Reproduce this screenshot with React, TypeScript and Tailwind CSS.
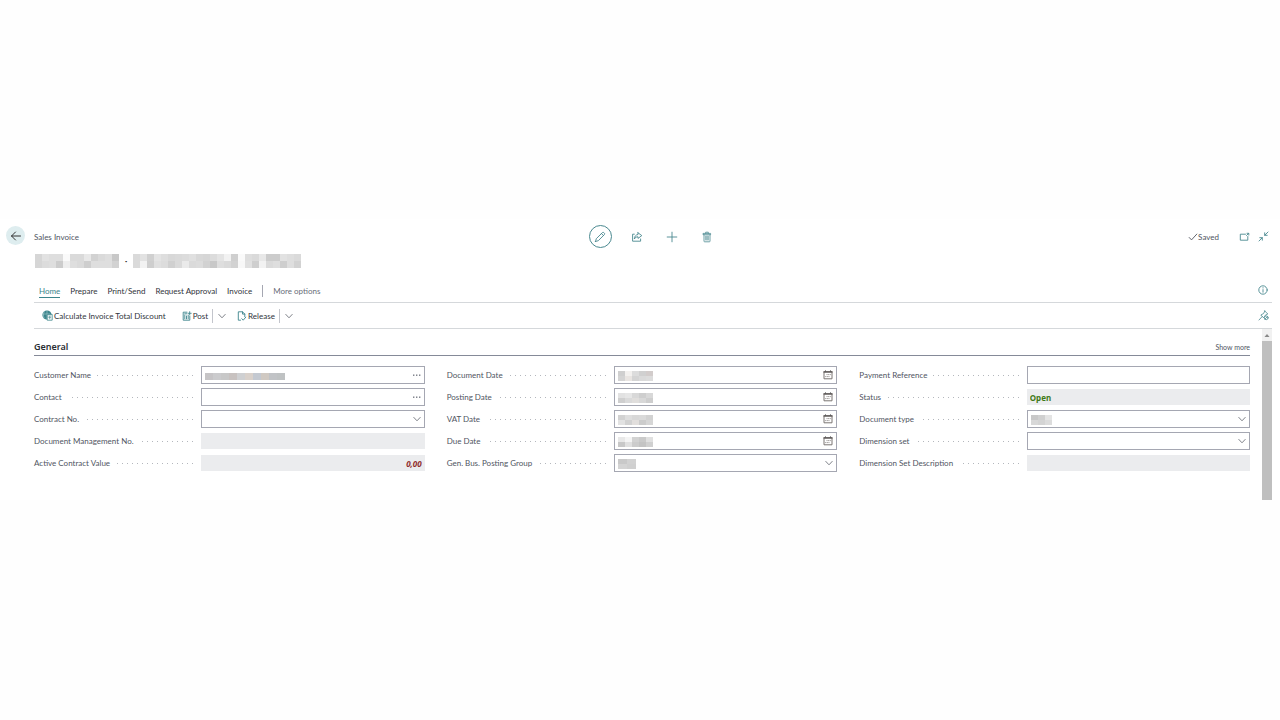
import React, { useState } from "react";

type Mosaic = { rows: string[][]; cell: string };

const headNo: string[][] = [
  ["#d6d6d6", "#e2e2e2", "#dedede", "#dedede", "#fafafa", "#dadada", "#dadada", "#e8e8e8", "#d2d2d2", "#dadada", "#dedede", "#c8c8c8"],
  ["#d6d6d6", "#dcdcdc", "#dedede", "#cccccc", "#eeeeee", "#dedede", "#dadada", "#cecece", "#dedede", "#dedede", "#dedede", "#d2d2d2"],
];
const headName: string[][] = [
  ["#dadada", "#e2e2e2", "#d0d0d0", "#e4e4e4", "#dedede", "#d8d8d8", "#dadada", "#dcdcdc", "#e0e0e0", "#d8d8d8", "#d6d6d6", "#dcdcdc", "#e4e4e4", "#f2f2f2", "#cfcfcf", "#fafafa", "#dedede", "#dadada", "#e8e8e8", "#cccccc", "#cccccc", "#e2e2e2", "#dedede", "#dadada"],
  ["#dadada", "#f2f2f2", "#cecece", "#e0e0e0", "#dcdcdc", "#d0d0d0", "#dadada", "#eaeaea", "#dadada", "#dcdcdc", "#d2d2d2", "#c8c8c8", "#dedede", "#dadada", "#d2d2d2", "#f8f8f8", "#e0e0e0", "#cecece", "#f2f2f2", "#dadada", "#dedede", "#cecece", "#dedede", "#d2d2d2"],
];

function Blocks({ rows, cell }: Mosaic) {
  return (
    <span aria-hidden="true" className="flex flex-col">
      {rows.map((row, i) => (
        <span key={i} className="flex">
          {row.map((color, j) => (
            <span key={j} className={cell} style={{ backgroundColor: color }} />
          ))}
        </span>
      ))}
    </span>
  );
}

const icon = { fill: "none", stroke: "currentColor", strokeLinecap: "round", strokeLinejoin: "round" } as const;

const Chevron = () => (
  <svg viewBox="0 0 10 10" className="size-2.5 text-[#70747c]" {...icon} strokeWidth=".9"><path d="M1.8 3.4 5 6.8l3.2-3.4" /></svg>
);
const Dots = () => (
  <svg viewBox="0 0 10 10" className="size-2.5" fill="#777b84"><rect x="1" y="4.5" width="1.4" height="1.4" /><rect x="4" y="4.5" width="1.4" height="1.4" /><rect x="7" y="4.5" width="1.4" height="1.4" /></svg>
);
const Calendar = () => (
  <svg viewBox="0 0 10 10" className="size-2.5">
    <path d="M1 1.5h8v7.3H1z" fill="#fff" stroke="#7b7573" />
    <path d="M.5 1.2h9v1.6h-9z" fill="#6b6665" />
    <path d="M2.5.4v1.4M7.5.4v1.4" stroke="#5a5a5a" />
    <path d="M3.5 4.6h4.3M2.2 6.6h4.3" stroke="#9b9795" strokeDasharray="1.1 .5" />
  </svg>
);

type Kind = "lookup" | "select" | "date" | "text" | "readonly";
type FieldDef = { label: string; kind: Kind; value?: string; tone?: string; mosaic?: Mosaic };

const date = (a: string[], b: string[]): Mosaic => ({ rows: [a, b], cell: "h-[5px] w-[7px]" });

const columns: FieldDef[][] = [
  [
    { label: "Customer Name", kind: "lookup", mosaic: { cell: "h-[7px] w-[8px]", rows: [["#c6c4c6", "#cbcbcd", "#c8c8c8", "#c8c2c0", "#cfd0d2", "#d9d1cb", "#c4c9d1", "#d0c9c2", "#c1c3c6", "#bfc2c3"]] } },
    { label: "Contact", kind: "lookup" },
    { label: "Contract No.", kind: "select" },
    { label: "Document Management No.", kind: "readonly" },
    { label: "Active Contract Value", kind: "readonly", value: "0,00", tone: "text-right italic text-[#8f2c2c]" },
  ],
  [
    { label: "Document Date", kind: "date", mosaic: date(["#cfcfcf", "#f3f1ef", "#dcdcdc", "#d0d0d0", "#d2cccb"], ["#d4d4d4", "#e9e5e2", "#d4d4d4", "#dadada", "#dcdcdc"]) },
    { label: "Posting Date", kind: "date", mosaic: date(["#e2e2e2", "#e6e6e6", "#d8d8d8", "#cecece", "#d8d8d8"], ["#cfcfcf", "#dadada", "#e0dedc", "#d8d8d8", "#cecece"]) },
    { label: "VAT Date", kind: "date", mosaic: date(["#d2d2d2", "#dedede", "#d8d8d8", "#dadada", "#d2d2d2"], ["#e2e2e2", "#d2d2d2", "#e2dfdd", "#cccccc", "#d6d6d6"]) },
    { label: "Due Date", kind: "date", mosaic: date(["#e8e8e8", "#f4f4f4", "#d2d2d2", "#cacaca", "#e0e0e0"], ["#c8c8c8", "#e0e0e0", "#cccccc", "#c4c4c4", "#d0d0d0"]) },
    { label: "Gen. Bus. Posting Group", kind: "select", mosaic: { cell: "h-[5px] w-[9px]", rows: [["#c9c9c9", "#d2d2d2"], ["#d4d4d4", "#d0d0d0"]] } },
  ],
  [
    { label: "Payment Reference", kind: "text" },
    { label: "Status", kind: "readonly", value: "Open", tone: "text-[#3f7a16]" },
    { label: "Document type", kind: "select", mosaic: { cell: "h-[5px] w-[7px]", rows: [["#c8c8c8", "#d0d0d0", "#e4e4e4"], ["#d8d8d8", "#d4d4d4", "#dcdcdc"]] } },
    { label: "Dimension set", kind: "select" },
    { label: "Dimension Set Description", kind: "readonly" },
  ],
];

function Field({ field }: { field: FieldDef }) {
  const { label, kind, value = "", tone = "", mosaic } = field;
  const id = label.toLowerCase().replace(/[^a-z]+/g, "-");
  const readOnly = kind === "readonly";
  return (
    <div className="flex h-[18px] items-center">
      <div className="flex w-3/7 shrink-0 items-center gap-1.5 pr-2">
        <label htmlFor={id} className="whitespace-nowrap">{label}</label>
        <span className="h-px flex-1 bg-[repeating-linear-gradient(to_left,#b4b7bd_0_1px,transparent_1px_5px)]" />
      </div>
      <div className={readOnly ? "grid h-4 flex-1 items-center bg-[#ebecee] *:col-start-1 *:row-start-1" : "grid h-[18px] flex-1 items-center border border-[#a5a7b2] bg-white *:col-start-1 *:row-start-1"}>
        {kind === "select" ? (
          <select id={id} className="h-full w-full appearance-none bg-transparent px-1 outline-none" />
        ) : (
          <input id={id} type="text" readOnly={readOnly} defaultValue={value} className={`h-full w-full min-w-0 bg-transparent px-[3px] font-['Noto_Sans',sans-serif] font-bold outline-none ${tone}`} />
        )}
        {mosaic && <span className="pointer-events-none justify-self-start pt-0.5 pl-[3px]"><Blocks {...mosaic} /></span>}
        {kind === "select" && <span className="pointer-events-none mr-0.5 justify-self-end"><Chevron /></span>}
        {kind === "lookup" && <button type="button" aria-label={`Look up ${label}`} className="mr-0.5 justify-self-end"><Dots /></button>}
        {kind === "date" && <button type="button" aria-label={`Choose ${label}`} className="mr-[3px] justify-self-end"><Calendar /></button>}
      </div>
    </div>
  );
}

const tabs = ["Home", "Prepare", "Print/Send", "Request Approval", "Invoice"];

export default function App() {
  const [tab, setTab] = useState("Home");
  return (
    <div className="min-h-screen bg-[#fefefe] pt-[219px] font-['Lato','Noto_Sans',sans-serif] text-[8px] leading-3 text-[#50555f]">
      <div className="bg-white">
        <header className="grid h-[35px] grid-cols-[1fr_auto_1fr] items-center pr-[15px] pl-1.5">
          <div className="flex items-center gap-[9px]">
            <button type="button" aria-label="Back" className="mb-0.5 grid size-[19px] place-items-center rounded-full bg-[#deedef] text-[#333]">
              <svg viewBox="0 0 12 12" className="size-3" {...icon}><path d="M10.5 6h-9M5.5 2 1.5 6l4 4" /></svg>
            </button>
            <span>Sales Invoice</span>
          </div>
          <div className="flex items-center gap-[19px] pl-[30px] text-[#4a8990]">
            <button type="button" aria-label="Edit" className="grid size-[23px] place-items-center rounded-full border border-current">
              <svg viewBox="0 0 12 12" className="size-3" {...icon} strokeWidth=".9"><path d="m1.5 10.5.8-2.8 6.1-6.1a1 1 0 0 1 1.4 0l.6.6a1 1 0 0 1 0 1.4L4.3 9.7l-2.8.8ZM7.5 2.6l1.9 1.9" /></svg>
            </button>
            <button type="button" aria-label="Share">
              <svg viewBox="0 0 12 12" className="mr-1 size-3" {...icon} strokeWidth=".9"><path d="M3.3 3.2H1.6v7h8V8M7 1.8l3.8 2.8L7 7.4V5.8C5.4 5.7 4.2 6.5 3.3 8c.2-2.6 1.5-4.2 3.7-4.5V1.8Z" /></svg>
            </button>
            <button type="button" aria-label="New">
              <svg viewBox="0 0 12 12" className="mr-1 size-3" {...icon} strokeWidth=".9"><path d="M6 1.2v9.6M1.2 6h9.6" /></svg>
            </button>
            <button type="button" aria-label="Delete">
              <svg viewBox="0 0 12 12" className="size-3" {...icon} strokeWidth=".8"><path d="M2.4 2.4h7.2v1.3H2.4zM4.7 2.3V1.2h2.6v1.1M3 3.8v6.4q0 .6.6.6h4.8q.6 0 .6-.6V3.8M4.8 5v4M6 5v4M7.2 5v4" /></svg>
            </button>
          </div>
          <div className="flex items-center justify-end text-[#4a8990]">
            <span className="mr-5 flex items-center text-[#50555f]">
              <svg viewBox="0 0 10 10" className="size-2.5" {...icon} strokeWidth=".9"><path d="m1.2 5.5 2.3 2.4 5.3-5.8" /></svg>
              Saved
            </span>
            <button type="button" aria-label="Open in new window" className="mr-2">
              <svg viewBox="0 0 11 10" className="h-2.5 w-[11px]" {...icon} strokeWidth=".9"><path d="M6.5 2.2H1.3v6h7.5V4.5M7.5 3.5l2-2M8 1.3h1.8v1.8" /></svg>
            </button>
            <button type="button" aria-label="Exit full width" className="-mr-1">
              <svg viewBox="0 0 11 11" className="size-[11px]" {...icon} strokeWidth=".9"><path d="M10 1 6.7 4.3M6.7 1.8v2.5h2.5M1 10l3.3-3.3M1.8 6.7h2.5v2.5" /></svg>
            </button>
          </div>
        </header>

        <h1 className="ml-[35px] flex h-3.5 items-center text-[#333]">
          <Blocks rows={headNo} cell="h-[7px] w-[7px]" />
          <span className="w-3.5 text-center font-bold">·</span>
          <Blocks rows={headName} cell="h-[7px] w-[7px]" />
        </h1>

        <div className="mt-[11px] mr-2 ml-[34px] flex h-6 items-center border-b border-[#d5d8db] pr-1">
          <nav aria-label="Actions" className="flex items-center gap-2.5 pt-px pl-[5px] text-[#30343b]">
            {tabs.map((name) => (
              <button key={name} type="button" onClick={() => setTab(name)} className={name === tab ? "border-b border-[#3c858c] text-[#3c858c]" : "border-b border-transparent"}>{name}</button>
            ))}
            <span className="h-3 w-px bg-[#a5a7b2]" />
            <button type="button" className="border-b border-transparent text-[#686d78]">More options</button>
          </nav>
          <button type="button" aria-label="Details" className="mb-px ml-auto text-[#4a8990]">
            <svg viewBox="0 0 10 10" className="size-2.5" {...icon} strokeWidth=".9"><circle cx="5" cy="5" r="4.2" /><path d="M5 4.6v2.6M5 2.7v.3" /></svg>
          </button>
        </div>

        <div className="mr-2 ml-[34px] flex h-[26px] items-center border-b border-[#d5d8db] pr-[3px] pl-2 text-[#30343b]">
          <button type="button" className="mr-4 flex items-center gap-px">
            <svg viewBox="0 0 11 11" className="size-[11px]"><circle cx="5" cy="5" r="4.6" fill="#3c858c" /><path d="M5 .5v9M1 4h7M2.5 1.5c-1.5 2-1.5 5 0 7" fill="none" stroke="#a8cfd2" strokeWidth=".6" /><path d="M5.2 4.4h5v5.8h-5z" fill="#fff" stroke="#3c858c" strokeWidth=".8" /><path d="M6.3 6h2.8M6.3 7.6h2.8M7.7 6v3.2" stroke="#3c858c" strokeWidth=".6" /></svg>
            Calculate Invoice Total Discount
          </button>
          <button type="button" className="flex items-center gap-px">
            <svg viewBox="0 0 10 10" className="size-2.5" {...icon} stroke="#3c858c" strokeWidth=".9"><path d="M5 1.2H1.2v8h6.6V5M2.8 4v3.8M4.5 5v2.8M6.2 4v3.8M2.7 2.8h2M6 2.3h3.2M7.7.7v3.1" /></svg>
            Post
          </button>
          <span className="mx-1 h-3.5 w-px bg-[#c3c5cc]" />
          <button type="button" aria-label="More posting actions" className="mr-2.5"><Chevron /></button>
          <button type="button" className="flex items-center gap-px">
            <svg viewBox="0 0 10 10" className="size-2.5" {...icon} stroke="#3c858c" strokeWidth=".9"><path d="M3.5 9.2H1.3V.8h4.2l2.3 2.3v2.6M5.5.8v2.3h2.3M4.8 7.7l1.4 1.5 2.6-3" /></svg>
            Release
          </button>
          <span className="mx-1 h-3.5 w-px bg-[#c3c5cc]" />
          <button type="button" aria-label="More release actions"><Chevron /></button>
          <button type="button" aria-label="Unpin actions" className="ml-auto text-[#4a8990]">
            <svg viewBox="0 0 11 11" className="size-[11px]" {...icon} strokeWidth=".8"><path d="m6.8 1 3 3-2.5 1.2L5.8 8 2.8 5l2.8-1.5L6.8 1ZM4.2 6.5 1 10" /><circle cx="8.2" cy="7.8" r="1.9" fill="#fff" /><path d="m6.9 9.1 2.6-2.6" /></svg>
          </button>
        </div>

        <main className="flex h-[171px] items-stretch pr-2">
          <section className="min-w-0 flex-1 pl-[34px]">
            <div className="mr-3 flex h-[27px] items-center justify-between border-b border-[#858a98] pt-2.5">
              <h2 className="font-['Noto_Sans',sans-serif] text-[9px] font-semibold text-[#292d33]">General</h2>
              <button type="button" className="text-[7px]">Show more</button>
            </div>
            <form className="mt-2.5 mr-3 grid grid-cols-3 gap-x-[22px]" onSubmit={(e) => e.preventDefault()}>
              {columns.map((fields, i) => (
                <div key={i} className="flex flex-col gap-1">
                  {fields.map((f) => <Field key={f.label} field={f} />)}
                </div>
              ))}
            </form>
          </section>
          <div aria-hidden="true" className="flex w-2.5 flex-col bg-[#f1f1f1]">
            <svg viewBox="0 0 10 12" className="h-3 w-2.5"><path d="m5 5 2.5 3h-5Z" fill="#888" /></svg>
            <span className="flex-1 bg-[#bfbfbf]" />
          </div>
        </main>
      </div>
    </div>
  );
}
